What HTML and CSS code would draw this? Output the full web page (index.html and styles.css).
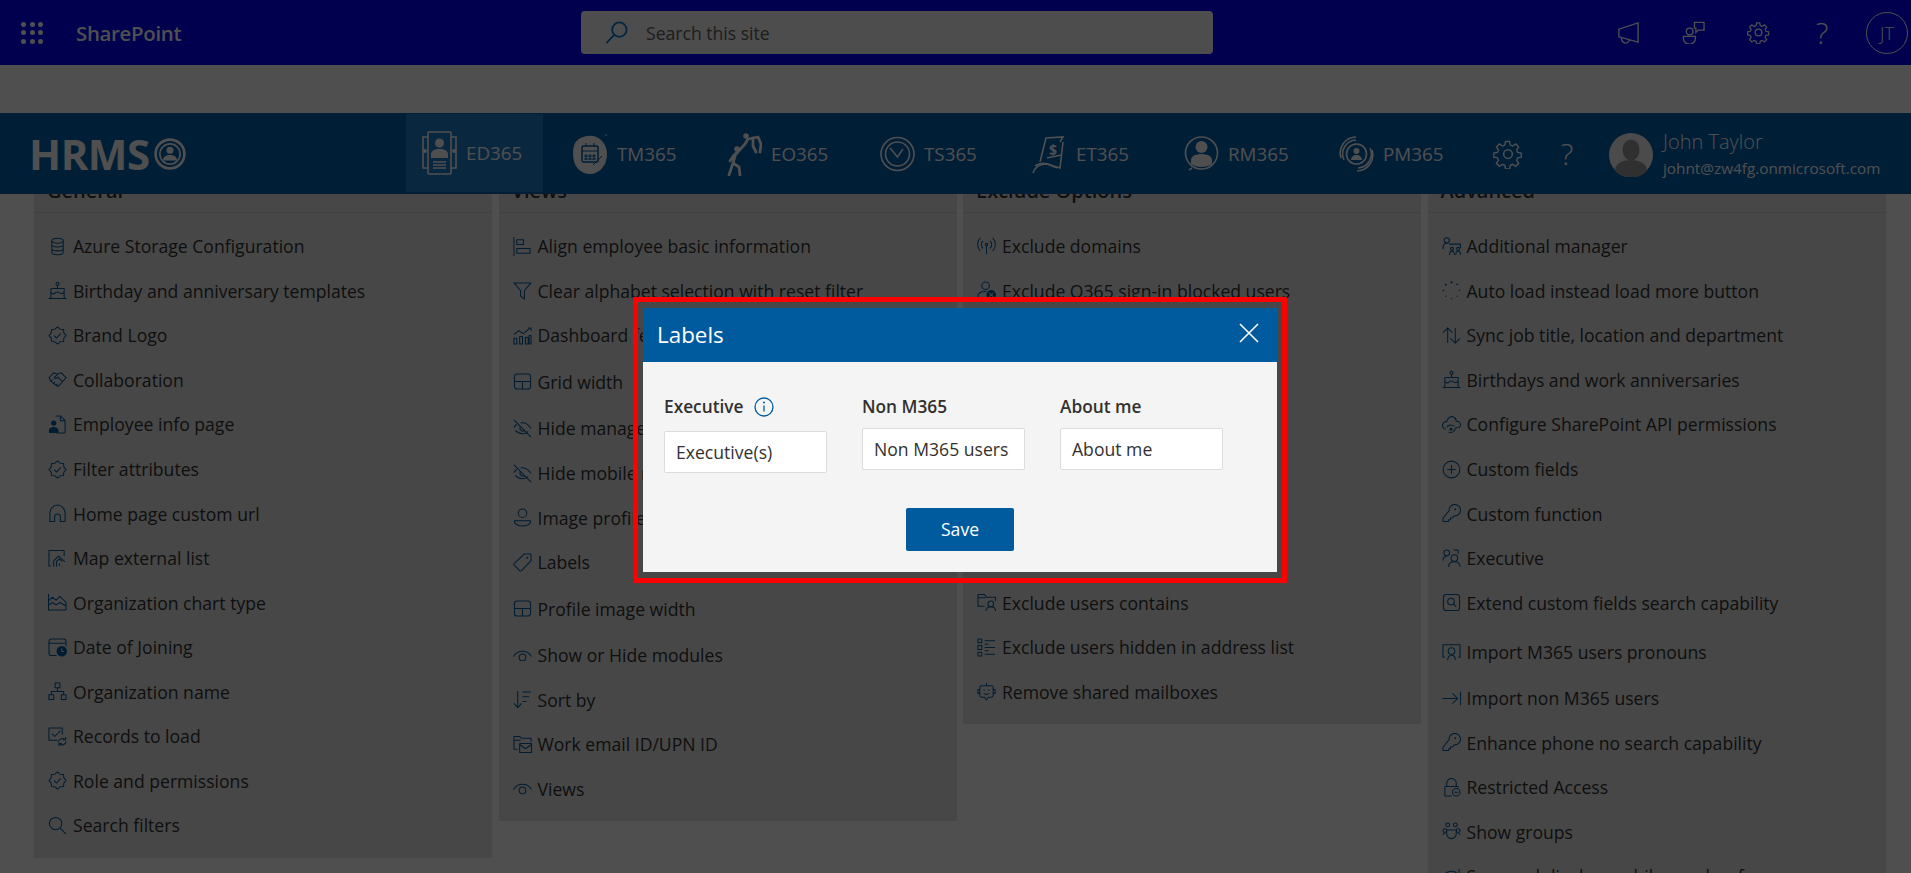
FILE: index.html
```html
<!DOCTYPE html>
<html lang="en">
<head>
  <meta charset="UTF-8" />
  <title>HRMS - Labels</title>
  <link rel="stylesheet" href="styles.css">
</head>
<body>

  <svg class="sprite" xmlns="http://www.w3.org/2000/svg">
    <symbol id="i-db" viewBox="0 0 20 20"><ellipse cx="10" cy="4" rx="6" ry="2.6"/><path d="M4 4v12c0 1.5 2.700 2.600 6 2.600s6-1.100 6-2.600V4M4 8c0 1.500 2.700 2.600 6 2.600s6-1.100 6-2.600M4 12c0 1.500 2.700 2.600 6 2.600s6-1.100 6-2.600"/></symbol>
    <symbol id="i-cake" viewBox="0 0 20 20"><circle cx="10" cy="3" r="1.600"/><path d="M10 5v3M3 8h14v10M3 8v10M3 12c2 2 3 2 4.500.5S10 11 12 12.500s3 1 5-.5M0.500 18.500h19"/></symbol>
    <symbol id="i-badge" viewBox="0 0 20 20"><path d="M19 10l-2.350 2.760-.29 3.600-3.600.29L10 19l-2.760-2.350-3.600-.29-.29-3.600L1 10l2.350-2.760.29-3.600 3.600-.29L10 1l2.760 2.350 3.600.29.29 3.600z"/><path d="M6.500 10.200l2.500 2.500 4.500-5"/></symbol>
    <symbol id="i-hands" viewBox="0 0 20 20"><path d="M1 8l5-5 4 1.500L14 3l5 5-6.500 7.500-2 2L3 12zM10 4.500L6.500 8c1 1.500 2.500 1 4-.5l5 5M3 12l2-2M5.500 14.500l2-2M8 16.500l2-2"/></symbol>
    <symbol id="i-docuser" viewBox="0 0 20 20"><path d="M8 1h5l5 5v12a1 1 0 0 1-1 1H9M13 1v5h5"/><circle class="solid" cx="6" cy="8.500" r="2.800"/><path class="solid" d="M1 19v-3c0-2 2-3.500 5-3.500s5 1.500 5 3.500v3z"/></symbol>
    <symbol id="i-home" viewBox="0 0 20 20"><path d="M2 18.500V9.500C2 5 6 1 10 1s8 4 8 8.500v9h-5v-5a3 3 0 0 0-6 0v5z"/></symbol>
    <symbol id="i-map" viewBox="0 0 20 20"><path d="M3 18H1V1.500h16v6M6 18.500v-6l5-5 7 6M9 18.500v-5.500l3-2.500 3 2.500M12 18v-3"/></symbol>
    <symbol id="i-area" viewBox="0 0 20 20"><path d="M0.500 1v17h19M0.500 8l4-3.500 4 3 4-4 6.500 6.500v8M0.500 13l4-3 4 2.500 4-2.500 7 4"/></symbol>
    <symbol id="i-date" viewBox="0 0 20 20"><path d="M9 18.500H4a3 3 0 0 1-3-3V4a3 3 0 0 1 3-3h12a3 3 0 0 1 3 3v5M1 5.500h18"/><circle class="solid" cx="14.500" cy="14" r="5.500"/><path class="cut" d="M14.500 11v3.300h2.500"/></symbol>
    <symbol id="i-org" viewBox="0 0 20 20"><rect x="7.500" y="1" width="5" height="5"/><rect x="1" y="13.500" width="5" height="5"/><rect x="14" y="13.500" width="5" height="5"/><path d="M10 6v4M3.500 13.500V10h13v3.500"/></symbol>
    <symbol id="i-records" viewBox="0 0 20 20"><path d="M10 14H1V1h14v7M4 7l3 3 6-6"/><path d="M11 16a4 4 0 0 1 7-2.500M19 15a4 4 0 0 1-7 2.500M18.500 10.500v3h-3M11.500 20v-2.500h3"/></symbol>
    <symbol id="i-search" viewBox="0 0 20 20"><circle cx="8" cy="8" r="6.500"/><path d="M13 13l6 6"/></symbol>
    <symbol id="i-align" viewBox="0 0 20 20"><path d="M1 0v20M4 3h7v5H4zM4 12h14v5H4z"/></symbol>
    <symbol id="i-funnel" viewBox="0 0 20 20"><path d="M1 2h18l-7 8v9l-4-3v-6z"/></symbol>
    <symbol id="i-dash" viewBox="0 0 20 20"><path d="M1 13h3v6H1zM7 11h3v8H7zM13 12h3v7h-3zM17 10v9h2v-9zM1 9l5-4 5 3 7-6M16 2h3v3"/></symbol>
    <symbol id="i-grid" viewBox="0 0 20 20"><rect x="1.500" y="2" width="17" height="16" rx="3"/><path d="M1.500 10h17M10 10v8"/></symbol>
    <symbol id="i-eyeoff" viewBox="0 0 20 20"><path d="M1 1l18 18M1 9c1-1.500 2-2.500 3-3.200M8 4.200C12 3.500 16 5.500 19 10M16 13c-1 1-2 1.500-3 2-4 1-8 0-10.500-3"/><path d="M7.500 8a3.500 3.500 0 0 0 4.500 4.500"/></symbol>
    <symbol id="i-person" viewBox="0 0 20 20"><circle cx="10" cy="5.500" r="4.500"/><path d="M1.500 13.500h17v1c0 2.500-4 4.500-8.500 4.500s-8.500-2-8.500-4.500z"/></symbol>
    <symbol id="i-tag" viewBox="0 0 20 20"><path d="M12 1h6a1 1 0 0 1 1 1v6L9 18.500a1.500 1.500 0 0 1-2 0L1.500 13a1.500 1.500 0 0 1 0-2z"/><circle class="solid" cx="15" cy="5" r="1"/></symbol>
    <symbol id="i-eye" viewBox="0 0 20 20"><path d="M0.500 11C3 7 6.500 5.500 10 5.500s7 1.500 9.500 5.500"/><circle cx="10" cy="12" r="3.500"/></symbol>
    <symbol id="i-sort" viewBox="0 0 20 20"><path d="M5 1v17M1 14l4 4.500L9 14M10 2h9M10 7h7M10 12h4"/></symbol>
    <symbol id="i-foldermail" viewBox="0 0 20 20"><path d="M5 15H1V1.500h6l2 2h10V7M1 5.500h7"/><rect x="7" y="9" width="12.500" height="9.500"/><path d="M7 10l6.200 4.500L19.500 10"/></symbol>
    <symbol id="i-antenna" viewBox="0 0 20 20"><circle cx="10" cy="8" r="1.300"/><path d="M10 9.500V18M6.500 12a5 5 0 0 1 0-8M13.500 4a5 5 0 0 1 0 8M3.500 15a10 10 0 0 1 0-14M16.500 1a10 10 0 0 1 0 14"/></symbol>
    <symbol id="i-userx" viewBox="0 0 20 20"><circle cx="9" cy="5" r="4"/><path d="M1 18v-2c0-3 3-5 7-5h2"/><circle class="solid" cx="15" cy="14.500" r="5"/><path class="cut" d="M13 12.500l4 4M17 12.500l-4 4"/></symbol>
    <symbol id="i-folderuser" viewBox="0 0 20 20"><path d="M8 14H1V1.500h7l2 3h9.500v4M1 5h8"/><circle cx="14.500" cy="11.500" r="3"/><path d="M9.500 19c0-3 2-4.500 5-4.500s5 1.500 5 4.500"/></symbol>
    <symbol id="i-boxlist" viewBox="0 0 20 20"><rect x="1" y="1" width="4" height="4"/><rect x="1" y="8" width="4" height="4"/><rect x="1" y="15" width="4" height="4"/><path d="M8 3h11M8 10h11M8 17h11M8 6.500h4M8 13.500h4"/></symbol>
    <symbol id="i-bot" viewBox="0 0 20 20"><path d="M10 1v3M5 4h10a2 2 0 0 1 2 2v8a2 2 0 0 1-2 2h-3l-2 3-2-3H5a2 2 0 0 1-2-2V6a2 2 0 0 1 2-2zM3 8H1v4h2M17 8h2v4h-2M7 12c1.500 1 4.500 1 6 0"/><circle class="solid" cx="7.500" cy="8.500" r=".8"/><circle class="solid" cx="12.500" cy="8.500" r=".8"/></symbol>
    <symbol id="i-manager" viewBox="0 0 20 20"><circle cx="5" cy="3.500" r="2.800"/><path d="M1 13c0-4 1.500-6.500 4-6.500h1M7.500 7.500h12v4M8 19c0-2.500 1-4 2.500-4S13 16.500 13 19M14.500 19c0-2.500 1-4 2.500-4s2.500 1.500 2.500 4"/><circle cx="10.500" cy="12.500" r="1.600"/><circle cx="17" cy="12.500" r="1.600"/></symbol>
    <symbol id="i-spin" viewBox="0 0 20 20"><g class="dots"><circle cx="10" cy="1.500" r="1.200"/><circle cx="16" cy="3.500" r="1"/><circle cx="18.500" cy="10" r=".8"/><circle cx="16" cy="16" r=".7"/><circle cx="10" cy="18.500" r=".7"/><circle cx="4" cy="16" r=".7"/><circle cx="1.500" cy="10" r=".9"/><circle cx="4" cy="4" r="1.100"/></g></symbol>
    <symbol id="i-updown" viewBox="0 0 20 20"><path d="M6 18V2M1 7l5-5 5 5M14 2v16M9 13l5 5 5-5"/></symbol>
    <symbol id="i-cloud" viewBox="0 0 20 20"><path d="M4 15C1 14 .5 12 .5 10.500A4 4 0 0 1 5 7C6 3 9 1 12 2c2 .7 3 2.500 3 4.500 3 0 4.500 2 4.500 3.500 0 2-1.500 3.500-3.500 3.500h-2"/><path d="M5 13a5 5 0 0 1 8-1M14 14a5 5 0 0 1-7 4"/><circle class="solid" cx="9.500" cy="15" r="1.500"/></symbol>
    <symbol id="i-plus" viewBox="0 0 20 20"><circle cx="10" cy="10" r="8.800"/><path d="M10 5.500v9M5.500 10h9"/></symbol>
    <symbol id="i-key" viewBox="0 0 20 20"><path d="M7.500 7a6 6 0 1 1 5.500 5.500l-2 2h-2v2H7v2H1v-3.500z"/><circle class="solid" cx="14" cy="5.500" r="1"/></symbol>
    <symbol id="i-people" viewBox="0 0 20 20"><circle cx="5" cy="4" r="3"/><path d="M1 12c0-2.500 1.500-4 4-4M12 1h5v4"/><circle cx="13" cy="9.500" r="3.500"/><path d="M7 19c0-3.500 2.500-5.500 6-5.500s6 2 6 5.500"/></symbol>
    <symbol id="i-boxsearch" viewBox="0 0 20 20"><rect x="1.500" y="1.500" width="17" height="17" rx="3"/><circle cx="9.500" cy="9" r="3.500"/><path d="M12 11.500l3 3"/></symbol>
    <symbol id="i-pronoun" viewBox="0 0 20 20"><path d="M3 16H1V3h18v13h-2M6 19c0-3 1.500-5 4-5s4 2 4 5"/><circle cx="10" cy="9.500" r="3.500"/></symbol>
    <symbol id="i-toend" viewBox="0 0 20 20"><path d="M0.500 10h16M11 4.500l5.500 5.500-5.500 5.500M19.500 3v14"/></symbol>
    <symbol id="i-lock" viewBox="0 0 20 20"><path d="M5 9V5.500a5 5 0 0 1 10 0V9M3 9h14v1M3 9v10h7"/><circle cx="15" cy="15" r="4"/><path d="M13 15h4"/></symbol>
    <symbol id="i-groups" viewBox="0 0 20 20"><circle cx="6" cy="3" r="2"/><circle cx="14" cy="3" r="2"/><circle cx="3" cy="9" r="2"/><circle cx="17" cy="9" r="2"/><path d="M5 8.500h10v4a5 5 0 0 1-10 0zM3 12c-1 0-2 1-2 1.500M17 12c1 0 2 1 2 1.500"/></symbol>
    <symbol id="i-redo" viewBox="0 0 20 20"><path d="M1 12a9 9 0 0 1 16-4M18 2v6h-6"/></symbol>
    <symbol id="i-gear" viewBox="0 0 24 24"><path d="M10.200 1.500h3.600l.6 3.100 2.100.9 2.600-1.800 2.600 2.600-1.800 2.600.9 2.100 3.100.6v3.600l-3.100.6-.9 2.100 1.800 2.600-2.600 2.600-2.600-1.800-2.100.9-.6 3.100h-3.600l-.6-3.100-2.100-.9-2.600 1.800-2.600-2.600 1.800-2.600-.9-2.100-3.100-.6v-3.600l3.100-.6.9-2.100-1.800-2.600 2.600-2.600 2.600 1.800 2.100-.9z" transform="translate(.6 .6) scale(.92)"/><circle cx="12" cy="12" r="3.500"/></symbol>
  </svg>

  <header class="suite-bar">
    <div class="waffle">
      <i></i><i></i><i></i><i></i><i></i><i></i><i></i><i></i><i></i>
    </div>
    <span class="suite-name">SharePoint</span>
    <div class="site-search">
      <svg class="site-search-icon" viewBox="0 0 24 24"><circle cx="15" cy="9" r="7.500"/><path d="M9.500 14.500L1.500 23"/></svg>
      <span>Search this site</span>
    </div>
    <div class="suite-icons">
      <svg class="suite-icon" viewBox="0 0 24 24"><path d="M22 2v20L2 16.500v-8zM5 17.500a4 4 0 0 0 8 2.500"/></svg>
      <svg class="suite-icon" viewBox="0 0 24 24"><circle cx="8" cy="11" r="3.500"/><path d="M1.500 16h12.500v2.500a5.500 5 0 0 1-12.500 0zM13 1.500h10v8h-6l-2.500 2.500V7.500H13z"/></svg>
      <svg class="suite-icon"><use href="#i-gear"/></svg>
      <span class="suite-help">?</span>
      <span class="suite-avatar">JT</span>
    </div>
  </header>

  <div class="band"></div>

  <nav class="app-nav">
    <div class="logo">
      <span>HRMS</span>
      <svg class="logo-mark" viewBox="0 0 30 30"><circle class="ring" cx="15" cy="15" r="13.500"/><circle class="ring-in" cx="15" cy="15" r="9.500"/><circle class="fill" cx="15" cy="11.500" r="3.300"/><path class="fill" d="M8.500 21c0-3.500 3-5 6.500-5s6.500 1.500 6.500 5z"/></svg>
    </div>
    <div class="nav-items">
      <a class="nav-item active">
        <svg class="nav-icon" viewBox="0 0 35 44"><path d="M6 6H1v31h5M29 6h5v31h-5"/><rect x="6" y="1" width="23" height="42" rx="1"/><circle class="fill" cx="17.500" cy="12" r="4.500"/><path class="fill" d="M9 27v-4c0-3 3.500-5 8.500-5s8.500 2 8.500 5v4z"/><path class="thin" d="M11 31h13M11 34h13M11 37h13"/><circle class="fill" cx="3" cy="20" r="2"/><circle class="fill" cx="32" cy="20" r="2"/></svg>
        <span>ED365</span>
      </a>
      <a class="nav-item">
        <svg class="nav-icon" viewBox="0 0 35 44"><path class="fill" d="M14 4c10-2 20 6 20 18s-8 20-17 20S0 35 0 22 5 6 14 4z"/><rect class="knock" x="9" y="14" width="16" height="16" rx="1.500"/><path class="knock thin" d="M9 19h16M13 22v6M17 22v6M21 22v6M11 24h12M11 27h12M13 11v4M21 11v4M20 33l9-9"/><circle class="fill" cx="33" cy="3" r=".8"/></svg>
        <span>TM365</span>
      </a>
      <a class="nav-item">
        <svg class="nav-icon" viewBox="0 0 35 44"><circle class="fill" cx="10" cy="17" r="2.800"/><circle class="fill" cx="19" cy="4" r="2.800"/><path class="limb" d="M9 21L6 31L2 43M6 31l6 4 1 8M9 22l9-10M7 23l-4 6M18 12l3-5 10-2 3 7-1 8M26 6l0 8 3 6"/></svg>
        <span>EO365</span>
      </a>
      <a class="nav-item">
        <svg class="nav-icon" viewBox="0 0 35 44"><circle class="line" cx="17.500" cy="22" r="16.500"/><circle class="line" cx="17.500" cy="22" r="12"/><path class="line thin" d="M10 16l7.500 9L23 17"/></svg>
        <span>TS365</span>
      </a>
      <a class="nav-item">
        <svg class="nav-icon" viewBox="0 0 35 44"><path class="line" d="M1 41c2-6 7-9 14-9l13 4 3-26M8 30L14 6l17-1-3 5M15 26l14-3"/><path class="line" d="M3 34c4-3 9-3 13-2l9 4"/><text class="nav-dollar" x="17" y="23">$</text></svg>
        <span>ET365</span>
      </a>
      <a class="nav-item">
        <svg class="nav-icon" viewBox="0 0 35 44"><circle class="line" cx="17.500" cy="21" r="16"/><circle class="fill" cx="17.500" cy="15" r="6"/><path class="fill" d="M7 32v-4c0-4 5-6 10.500-6S28 24 28 28v4c-3 2-7 3-10.500 3S10 34 7 32z"/><path class="line" d="M5 38l3-2"/></svg>
        <span>RM365</span>
      </a>
      <a class="nav-item">
        <svg class="nav-icon" viewBox="0 0 35 44"><circle class="line" cx="17.500" cy="22" r="10"/><path class="line" d="M5 28a14 14 0 0 1 12-20M31 16a14 14 0 0 1-12 20M2 26A16 16 0 0 1 17 5M33 18a16 16 0 0 1-15 21"/><circle class="fill" cx="17.500" cy="19" r="3"/><path class="fill" d="M12 28c0-3 2.500-5 5.500-5s5.500 2 5.500 5z"/></svg>
        <span>PM365</span>
      </a>
      <svg class="nav-gear"><use href="#i-gear"/></svg>
      <span class="nav-help">?</span>
      <div class="nav-user">
        <svg class="nav-avatar" viewBox="0 0 44 44"><circle class="avatar-bg" cx="22" cy="22" r="22"/><ellipse class="avatar-fg" cx="22" cy="17" rx="8.500" ry="10.500"/><path class="avatar-fg" d="M6 38c0-7 6-11 16-11s16 4 16 11a22 22 0 0 1-32 0z"/></svg>
        <div>
          <div class="nav-user-name">John Taylor</div>
          <div class="nav-user-mail">johnt@zw4fg.onmicrosoft.com</div>
        </div>
      </div>
    </div>
  </nav>

  <main class="settings">
    <section class="panel panel-general">
      <h3>General</h3>
      <ul>
        <li><svg><use href="#i-db"/></svg>Azure Storage Configuration</li>
        <li><svg><use href="#i-cake"/></svg>Birthday and anniversary templates</li>
        <li><svg><use href="#i-badge"/></svg>Brand Logo</li>
        <li><svg><use href="#i-hands"/></svg>Collaboration</li>
        <li><svg><use href="#i-docuser"/></svg>Employee info page</li>
        <li><svg><use href="#i-badge"/></svg>Filter attributes</li>
        <li><svg><use href="#i-home"/></svg>Home page custom url</li>
        <li><svg><use href="#i-map"/></svg>Map external list</li>
        <li><svg><use href="#i-area"/></svg>Organization chart type</li>
        <li><svg><use href="#i-date"/></svg>Date of Joining</li>
        <li><svg><use href="#i-org"/></svg>Organization name</li>
        <li><svg><use href="#i-records"/></svg>Records to load</li>
        <li><svg><use href="#i-badge"/></svg>Role and permissions</li>
        <li><svg><use href="#i-search"/></svg>Search filters</li>
      </ul>
    </section>

    <section class="panel panel-views">
      <h3>Views</h3>
      <ul>
        <li><svg><use href="#i-align"/></svg>Align employee basic information</li>
        <li><svg><use href="#i-funnel"/></svg>Clear alphabet selection with reset filter</li>
        <li><svg><use href="#i-dash"/></svg>Dashboard features</li>
        <li class="push"><svg><use href="#i-grid"/></svg>Grid width</li>
        <li class="push"><svg><use href="#i-eyeoff"/></svg>Hide manager</li>
        <li><svg><use href="#i-eyeoff"/></svg>Hide mobile number</li>
        <li><svg><use href="#i-person"/></svg>Image profile</li>
        <li><svg><use href="#i-tag"/></svg>Labels</li>
        <li class="push"><svg><use href="#i-grid"/></svg>Profile image width</li>
        <li class="push"><svg><use href="#i-eye"/></svg>Show or Hide modules</li>
        <li><svg><use href="#i-sort"/></svg>Sort by</li>
        <li><svg><use href="#i-foldermail"/></svg>Work email ID/UPN ID</li>
        <li><svg><use href="#i-eye"/></svg>Views</li>
      </ul>
    </section>

    <section class="panel panel-exclude">
      <h3>Exclude Options</h3>
      <ul>
        <li><svg><use href="#i-antenna"/></svg>Exclude domains</li>
        <li><svg><use href="#i-userx"/></svg>Exclude O365 sign-in blocked users</li>
        <li class="hidden-rows"></li>
        <li><svg><use href="#i-folderuser"/></svg>Exclude users contains</li>
        <li><svg><use href="#i-boxlist"/></svg>Exclude users hidden in address list</li>
        <li><svg><use href="#i-bot"/></svg>Remove shared mailboxes</li>
      </ul>
    </section>

    <section class="panel panel-advanced">
      <h3>Advanced</h3>
      <ul>
        <li><svg><use href="#i-manager"/></svg>Additional manager</li>
        <li><svg><use href="#i-spin"/></svg>Auto load instead load more button</li>
        <li><svg><use href="#i-updown"/></svg>Sync job title, location and department</li>
        <li><svg><use href="#i-cake"/></svg>Birthdays and work anniversaries</li>
        <li><svg><use href="#i-cloud"/></svg>Configure SharePoint API permissions</li>
        <li><svg><use href="#i-plus"/></svg>Custom fields</li>
        <li><svg><use href="#i-key"/></svg>Custom function</li>
        <li><svg><use href="#i-people"/></svg>Executive</li>
        <li><svg><use href="#i-boxsearch"/></svg>Extend custom fields search capability</li>
        <li class="push-more"><svg><use href="#i-pronoun"/></svg>Import M365 users pronouns</li>
        <li class="push"><svg><use href="#i-toend"/></svg>Import non M365 users</li>
        <li><svg><use href="#i-key"/></svg>Enhance phone no search capability</li>
        <li><svg><use href="#i-lock"/></svg>Restricted Access</li>
        <li><svg><use href="#i-groups"/></svg>Show groups</li>
        <li><svg><use href="#i-redo"/></svg>Sync and display mobile number from azure</li>
      </ul>
    </section>
  </main>

  <div class="overlay">
    <div class="highlight">
      <div class="dialog">
        <div class="dialog-head">
          <span>Labels</span>
          <svg class="dialog-close" viewBox="0 0 20 20"><path d="M1 1l18 18M19 1L1 19"/></svg>
        </div>
        <div class="dialog-body">
          <div class="fields">
            <div class="field field-first">
              <label>Executive
                <svg class="info" viewBox="0 0 20 20"><circle cx="10" cy="10" r="9"/><path d="M10 8.500v6"/><circle class="info-dot" cx="10" cy="5.500" r="1"/></svg>
              </label>
              <div class="input">Executive(s)</div>
            </div>
            <div class="field">
              <label>Non M365</label>
              <div class="input">Non M365 users</div>
            </div>
            <div class="field">
              <label>About me</label>
              <div class="input">About me</div>
            </div>
          </div>
          <button class="save">Save</button>
        </div>
      </div>
    </div>
  </div>

</body>
</html>
```

FILE: styles.css
```css
html, body {
  height: 100%;
}
body {
  margin: 0;
  height: 873px;
  overflow: hidden;
  background-color: #ffffff;
  color: #333333;
  font-family: 'Open Sans', 'Noto Sans', sans-serif;
  font-size: 17.6px;
}
.sprite {
  display: none;
}

/* suite bar */
.suite-bar {
  height: 65px;
  display: flex;
  align-items: center;
  background-color: #0000ff;
  color: #ffffff;
}
.waffle {
  display: grid;
  grid-template-columns: repeat(3, 5px);
  gap: 3.500px;
  margin-left: 21px;
}
.waffle i {
  width: 5px;
  height: 5px;
  border-radius: 50%;
  background-color: #ffffff;
}
.suite-name {
  margin-left: 33px;
  width: 505px;
  font-size: 20.400px;
  font-weight: 600;
  letter-spacing: -0.3px;
}
.site-search {
  width: 632px;
  height: 43px;
  display: flex;
  align-items: center;
  background-color: #f8f8f8;
  border-radius: 4px;
  color: #605e5c;
  font-size: 17.600px;
}
.site-search-icon {
  width: 23px;
  height: 23px;
  margin: 0 18px 0 24px;
  fill: none;
  stroke: #0078d4;
  stroke-width: 1.800;
}
.suite-icons {
  margin-left: 404px;
  display: flex;
  align-items: center;
}
.suite-icon {
  width: 23px;
  height: 23px;
  margin-right: 42px;
  fill: none;
  stroke: #ffffff;
  stroke-width: 1.400;
}
.suite-help {
  width: 20px;
  margin-right: 34px;
  font-size: 30px;
  font-weight: 300;
  line-height: 1;
  text-align: center;
}
.suite-avatar {
  width: 40px;
  height: 40px;
  border: 1px solid #ffffff;
  border-radius: 50%;
  display: flex;
  align-items: center;
  justify-content: center;
  font-size: 18px;
  font-weight: 300;
}

.band {
  height: 48px;
  background-color: #ffffff;
}

/* app nav */
.app-nav {
  position: relative;
  z-index: 2;
  height: 81px;
  display: flex;
  background-color: #0061ae;
  color: #ffffff;
}
.logo {
  width: 406px;
  padding-left: 29px;
  box-sizing: border-box;
  display: flex;
  align-items: center;
  gap: 4px;
  font-size: 42px;
  font-weight: 700;
  letter-spacing: -0.500px;
}
.logo-mark {
  width: 32px;
  height: 32px;
}
.logo-mark .ring,
.logo-mark .ring-in {
  fill: none;
  stroke: #ffffff;
}
.logo-mark .ring {
  stroke-width: 2.500;
}
.logo-mark .ring-in {
  stroke-width: 1.500;
}
.logo-mark .fill {
  fill: #ffffff;
}
.nav-items {
  flex: 1;
  display: grid;
  grid-template-columns: 151px 154px 153px 152px 152px 155px 170px 66px 50px 1fr;
  align-items: center;
}
.nav-item {
  height: 78px;
  padding-left: 16px;
  box-sizing: border-box;
  display: flex;
  align-items: center;
  gap: 9px;
  font-size: 18.800px;
}
.nav-item.active {
  width: 137px;
  background-color: #1f7fc9;
  margin-top: -2px;
}
.nav-icon {
  width: 35px;
  height: 44px;
  flex: none;
}
.nav-icon .fill {
  fill: #ffffff;
}
.nav-icon .knock {
  fill: none;
  stroke: #0061ae;
  stroke-width: 1.500;
}
.nav-icon .thin {
  stroke-width: 1;
}
.nav-icon .limb {
  fill: none;
  stroke: #ffffff;
  stroke-width: 2.800;
  stroke-linecap: round;
  stroke-linejoin: round;
}
.nav-item path:not(.fill):not(.knock):not(.limb),
.nav-item rect:not(.knock),
.nav-icon .line {
  fill: none;
  stroke: #ffffff;
  stroke-width: 1.600;
}
.nav-dollar {
  fill: #ffffff;
  font-size: 14px;
  font-weight: 700;
}
.nav-gear {
  width: 30px;
  height: 30px;
  fill: none;
  stroke: #ffffff;
  stroke-width: 1.200;
}
.nav-help {
  width: 16px;
  font-size: 30px;
  font-weight: 300;
  line-height: 1;
  text-align: center;
}
.nav-user {
  display: flex;
  align-items: center;
  gap: 10px;
  margin-top: 2px;
}
.nav-avatar {
  width: 44px;
  height: 44px;
  flex: none;
}
.avatar-bg {
  fill: #f3f3f3;
}
.avatar-fg {
  fill: #9a9a9a;
}
.nav-user-name {
  font-size: 20px;
  font-weight: 300;
  line-height: 26px;
}
.nav-user-mail {
  font-size: 15.300px;
  line-height: 26px;
}

/* settings grid, scrolled so the headings sit under the nav */
.settings {
  display: grid;
  grid-template-columns: repeat(4, 458px);
  column-gap: 6.500px;
  align-items: start;
  padding-left: 34px;
  margin-top: -20px;
}
.panel {
  background-color: #e6e6e6;
  padding-bottom: 10px;
}
.panel h3 {
  margin: 0;
  height: 38px;
  padding-left: 13px;
  border-bottom: 1px solid #d0d0d0;
  font-size: 20px;
  font-weight: 600;
  line-height: 33px;
}
.panel ul {
  list-style: none;
  margin: 0;
  padding: 11px 0 0 14px;
}
.panel li {
  height: 44.550px;
  display: flex;
  align-items: center;
  white-space: nowrap;
}
.panel li.push {
  margin-top: 2px;
}
.panel li.push-more {
  margin-top: 4.500px;
}
.panel li.hidden-rows {
  height: 267.300px;
}
.panel li svg {
  width: 19px;
  height: 19px;
  flex: none;
  margin-right: 6px;
  fill: none;
  stroke: #005a9e;
  stroke-width: 1.100;
  stroke-linejoin: round;
  overflow: visible;
}
.solid {
  fill: #005a9e;
  stroke: none;
}
.cut {
  fill: none;
  stroke: #e6e6e6;
}
.dots {
  fill: #005a9e;
  stroke: none;
}

/* dimmed layer and dialog */
.overlay {
  position: fixed;
  inset: 0;
  z-index: 5;
  background-color: rgba(0, 0, 0, 0.69);
  display: flex;
  align-items: center;
  justify-content: center;
  padding: 6px 0 0 9px;
  box-sizing: border-box;
}
.highlight {
  border: 5px solid #ff0000;
  padding: 6px 5px;
}
.dialog {
  width: 634px;
  height: 264px;
  background-color: #f4f4f4;
  color: #323130;
}
.dialog-head {
  height: 54px;
  padding: 0 14px 0 14px;
  display: flex;
  align-items: center;
  justify-content: space-between;
  background-color: #005a9e;
  color: #ffffff;
  font-size: 22.400px;
}
.dialog-close {
  width: 20px;
  height: 20px;
  margin: -4px 4px 0 0;
  stroke: #ffffff;
  stroke-width: 1.600;
}
.dialog-body {
  padding: 33px 0 0 21px;
}
.fields {
  display: flex;
  height: 113px;
}
.field {
  width: 198px;
}
.field label {
  height: 24px;
  display: flex;
  align-items: center;
  font-weight: 600;
  font-size: 17.300px;
  margin-bottom: 9px;
}
.field-first label {
  margin-bottom: 12px;
}
.info {
  width: 20px;
  height: 20px;
  margin-left: 10px;
  fill: none;
  stroke: #005a9e;
  stroke-width: 1.300;
}
.info-dot {
  fill: #005a9e;
  stroke: none;
}
.input {
  width: 163px;
  height: 42px;
  box-sizing: border-box;
  padding-left: 11px;
  display: flex;
  align-items: center;
  background-color: #ffffff;
  border: 1px solid #dcdcdc;
  border-radius: 2px;
  white-space: nowrap;
}
.save {
  display: block;
  width: 108px;
  height: 43px;
  margin-left: 242px;
  background-color: #005a9e;
  border: none;
  border-radius: 2px;
  color: #ffffff;
  font-family: inherit;
  font-size: 17.600px;
}
```
